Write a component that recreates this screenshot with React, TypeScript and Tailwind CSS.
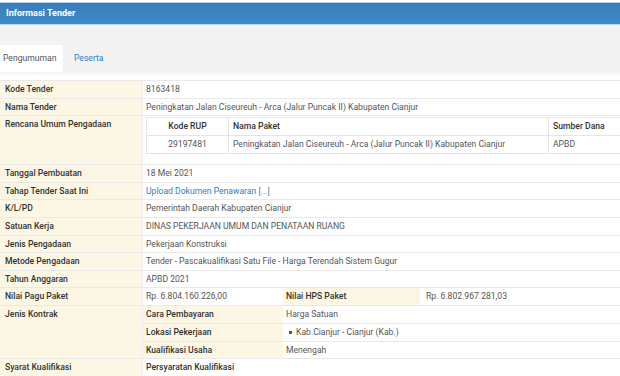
import React from "react";

const font = { fontFamily: "Roboto, 'Noto Sans', sans-serif" };

function Row({ label, children, h = "h-[17.6px]" }: { label: string; children?: React.ReactNode; h?: string }) {
  return (
    <div className={`grid grid-cols-[143px_1fr] border-t border-[#e9e9e9] ${h}`}>
      <div className="bg-[#fcf7e4] pl-[5px] pt-[2px] font-medium text-[#333] border-r border-[#eee]">{label}</div>
      <div className="pl-[3px] pt-[2px] text-[#555]">{children}</div>
    </div>
  );
}

export default function App() {
  return (
    <div className="w-[620px] h-[376px] overflow-hidden bg-white text-[8.6px] leading-[13px]" style={font}>
      <div className="h-[2px] bg-white" />
      <div className="h-[23px] bg-gradient-to-b from-[#3a7bb8] to-[#3d8ccd] border-t border-[#9cc5e6] border-b border-[#b6d6ef] flex items-center pl-[6px] text-white font-bold text-[9px]">
        Informasi Tender
      </div>
      <div className="h-[47px] bg-[#f3f3f3] flex items-end">
        <div className="w-[63px] h-[27px] bg-white flex items-center pl-[3px] text-[#555]">Pengumuman</div>
        <div className="h-[27px] flex items-center pl-[11px] text-[#2e7fc1]">Peserta</div>
      </div>
      <div className="h-[3px] bg-[#f7f7f7]" />
      <div className="h-[5px] bg-white" />
      <div>
        <Row label="Kode Tender">8163418</Row>
        <Row label="Nama Tender">Peningkatan Jalan Ciseureuh - Arca (Jalur Puncak II) Kabupaten Cianjur</Row>
        <div className="grid grid-cols-[143px_1fr] border-t border-[#e9e9e9] h-[49px]">
          <div className="bg-[#fcf7e4] pl-[5px] pt-[2px] font-medium text-[#333] border-r border-[#eee]">Rencana Umum Pengadaan</div>
          <div className="pl-[3px] pt-[1px]">
            <div className="border-l border-t border-[#e5e5e5] w-[480px]">
              <div className="grid grid-cols-[82px_320px_1fr] h-[18px] border-b border-[#e5e5e5] text-[#333] font-medium">
                <div className="flex items-center justify-center border-r border-[#e5e5e5]">Kode RUP</div>
                <div className="flex items-center pl-[4px] border-r border-[#e5e5e5]">Nama Paket</div>
                <div className="flex items-center pl-[4px]">Sumber Dana</div>
              </div>
              <div className="grid grid-cols-[82px_320px_1fr] h-[18px] border-b border-[#e5e5e5] text-[#555]">
                <div className="flex items-center justify-center border-r border-[#e5e5e5]">29197481</div>
                <div className="flex items-center pl-[4px] border-r border-[#e5e5e5]">Peningkatan Jalan Ciseureuh - Arca (Jalur Puncak II) Kabupaten Cianjur</div>
                <div className="flex items-center pl-[4px]">APBD</div>
              </div>
            </div>
          </div>
        </div>
        <Row label="Tanggal Pembuatan">18 Mei 2021</Row>
        <Row label="Tahap Tender Saat Ini"><span className="text-[#2e7fc1]">Upload Dokumen Penawaran [...]</span></Row>
        <Row label="K/L/PD">Pemerintah Daerah Kabupaten Cianjur</Row>
        <Row label="Satuan Kerja">DINAS PEKERJAAN UMUM DAN PENATAAN RUANG</Row>
        <Row label="Jenis Pengadaan">Pekerjaan Konstruksi</Row>
        <Row label="Metode Pengadaan">Tender - Pascakualifikasi Satu File - Harga Terendah Sistem Gugur</Row>
        <Row label="Tahun Anggaran">APBD 2021</Row>
        <div className="grid grid-cols-[143px_140px_137px_1fr] border-t border-[#e9e9e9] h-[17.6px]">
          <div className="bg-[#fcf7e4] pl-[5px] pt-[2px] font-medium text-[#333] border-r border-[#eee]">Nilai Pagu Paket</div>
          <div className="pl-[3px] pt-[2px] text-[#555]">Rp. 6.804.160.226,00</div>
          <div className="bg-[#fcf7e4] pl-[3px] pt-[2px] font-medium text-[#333]">Nilai HPS Paket</div>
          <div className="pl-[6px] pt-[2px] text-[#555]">Rp. 6.802.967.281,03</div>
        </div>
        <div className="grid grid-cols-[143px_1fr] border-t border-[#e9e9e9]">
          <div className="bg-[#fcf7e4] pl-[5px] pt-[2px] font-medium text-[#333] border-r border-[#eee]">Jenis Kontrak</div>
          <div>
            {[
              ["Cara Pembayaran", "Harga Satuan"],
              ["Lokasi Pekerjaan", "bullet"],
              ["Kualifikasi Usaha", "Menengah"],
            ].map(([k, v], i) => (
              <div key={k} className={`grid grid-cols-[140px_1fr] h-[17.4px] ${i > 0 ? "border-t border-[#e9e9e9]" : ""}`}>
                <div className="bg-[#fcf7e4] pl-[3px] pt-[2px] font-medium text-[#333]">{k}</div>
                <div className="pl-[3px] pt-[2px] text-[#555]">
                  {v === "bullet" ? (
                    <span className="flex items-center">
                      <span className="inline-block w-[3px] h-[3px] bg-[#555] ml-[3px] mr-[4px]" />
                      Kab.Cianjur - Cianjur (Kab.)
                    </span>
                  ) : (
                    v
                  )}
                </div>
              </div>
            ))}
          </div>
        </div>
        <Row label="Syarat Kualifikasi"><span className="text-[#333] font-medium">Persyaratan Kualifikasi</span></Row>
      </div>
    </div>
  );
}
